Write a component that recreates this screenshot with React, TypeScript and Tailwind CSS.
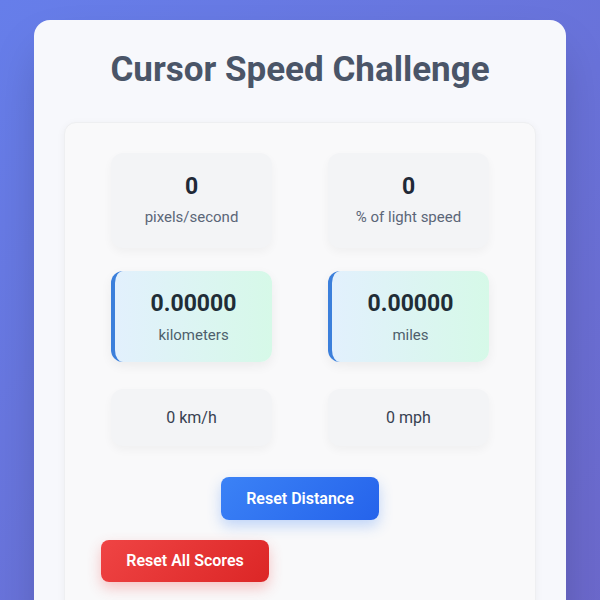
import React from 'react';

const stats = [
  { value: '0', label: 'pixels/second' },
  { value: '0', label: '% of light speed' },
];

const distances = [
  { value: '0.00000', label: 'kilometers' },
  { value: '0.00000', label: 'miles' },
];

const speeds = ['0 km/h', '0 mph'];

export default function App() {
  return (
    <div
      className="min-h-screen bg-[linear-gradient(135deg,#667eea_0%,#6c66c8_100%)] px-[34px] pt-5 pb-10"
      style={{ fontFamily: 'Roboto, "Noto Sans", sans-serif' }}
    >
      <div className="rounded-2xl bg-[#f7f8fc] px-[30px] pt-[30px] pb-10 shadow-2xl">
        <h1 className="text-center text-[35px] leading-10 font-bold text-[#4a5568]">
          Cursor Speed Challenge
        </h1>

        <div className="mt-8 rounded-xl border border-[#eeeff1] bg-[#f9f9fa] pt-[30px] pb-16 shadow-[0_2px_8px_rgba(0,0,0,0.05)]">
          <div className="grid grid-cols-[161px_161px] justify-center gap-x-[56px] gap-y-[23px]">
            {stats.map((s) => (
              <div
                key={s.label}
                className="rounded-xl bg-[#f3f4f6] pt-[18px] pb-[20px] text-center shadow-[0_4px_10px_rgba(0,0,0,0.04)]"
              >
                <div className="text-[23px] leading-8 font-bold text-[#1f2937]">{s.value}</div>
                <div className="mt-1 text-[15px] leading-[21px] text-[#5b6678]">{s.label}</div>
              </div>
            ))}

            {distances.map((d) => (
              <div
                key={d.label}
                className="rounded-xl border-l-4 border-[#3b7fdb] bg-[linear-gradient(90deg,#e2f0fd,#d6f9e8)] pt-[17px] pb-[16px] text-center shadow-[0_4px_12px_rgba(0,0,0,0.06)]"
              >
                <div className="text-[23px] leading-8 font-bold text-[#1f2d37]">{d.value}</div>
                <div className="mt-[5px] text-[15px] leading-[21px] text-[#4e5f6c]">{d.label}</div>
              </div>
            ))}

            {speeds.map((sp) => (
              <div
                key={sp}
                className="mt-1 flex h-[57px] items-center justify-center rounded-xl bg-[#f3f4f6] text-base text-[#374151] shadow-[0_4px_10px_rgba(0,0,0,0.04)]"
              >
                {sp}
              </div>
            ))}
          </div>

          <div className="mt-[31px] flex justify-center">
            <button className="h-[43px] rounded-lg bg-[linear-gradient(135deg,#3b82f6,#2563eb)] px-[25px] text-base font-semibold text-white shadow-[0_6px_14px_rgba(59,130,246,0.3)]">
              Reset Distance
            </button>
          </div>

          <div className="mt-5 pl-9">
            <button className="h-[42px] w-[168px] rounded-lg bg-[linear-gradient(135deg,#ef4444,#dc2626)] text-base font-semibold text-white shadow-[0_6px_14px_rgba(239,68,68,0.3)]">
              Reset All Scores
            </button>
          </div>
        </div>
      </div>
    </div>
  );
}
